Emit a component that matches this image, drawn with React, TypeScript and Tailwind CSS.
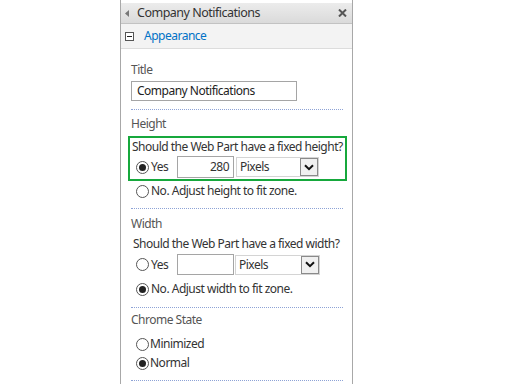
import React from "react";

const Radio = ({ checked }: { checked?: boolean }) => (
  <span className="inline-flex items-center justify-center w-[13px] h-[13px] rounded-full border border-[#555] bg-white shrink-0">
    {checked && <span className="w-[7px] h-[7px] rounded-full bg-[#222]" />}
  </span>
);

const Dots = ({ mt }: { mt: string }) => (
  <div className={`${mt} h-0 border-t border-dotted border-[#8ea3d6] mr-[9px]`} />
);

const Select = ({ w }: { w: string }) => (
  <div className={`${w} flex items-center h-[20px] border border-[#d4d4d4] bg-white`}>
    <span className="flex-1 pl-[3px] text-[#333]">Pixels</span>
    <span className="w-[18px] h-[18px] flex items-center justify-center border border-[#8a8a8a] bg-[#f0f0f0]">
      <svg width="10" height="7" viewBox="0 0 10 7">
        <path d="M1 1.2 L5 5.2 L9 1.2" stroke="#111" strokeWidth="2" fill="none" />
      </svg>
    </span>
  </div>
);

export default function App() {
  return (
    <div
      className="w-[512px] h-[384px] bg-white overflow-hidden text-[12px] tracking-[-0.5px] text-[#444] whitespace-nowrap"
      style={{ fontFamily: '"Noto Sans", "Open Sans", sans-serif' }}
    >
      <div className="ml-[120px] w-[233px] h-[384px] border-l border-r border-[#a8a8a8] pt-[3px] flex flex-col">
        <div className="h-[21px] box-border flex items-center bg-gradient-to-b from-[#ececec] to-[#dadada] border-b border-[#c2c2c2] pl-[4px] pr-[5px]">
          <svg width="4" height="7" viewBox="0 0 4 7" className="mr-[8px]">
            <path d="M4 0 L0 3.5 L4 7 Z" fill="#777" />
          </svg>
          <span className="flex-1 text-[#333] text-[12.5px]">Company Notifications</span>
          <svg width="9" height="8" viewBox="0 0 9 8">
            <path d="M1 0.5 L8 7.5 M8 0.5 L1 7.5" stroke="#555" strokeWidth="2" />
          </svg>
        </div>
        <div className="h-[25px] box-border flex items-center bg-[#f3f3f3] border-b border-[#dcdcdc] pl-[4px]">
          <span className="w-[9px] h-[9px] border border-[#555] bg-white flex items-center justify-center mr-[10px]">
            <span className="w-[5px] h-[1px] bg-[#222]" />
          </span>
          <span className="text-[#0072c6]">Appearance</span>
        </div>
        <div className="pl-[10px] pt-[12px] flex flex-col">
          <div className="h-[18px] leading-[18px] text-[#555]">Title</div>
          <div className="mt-[2px] w-[166px] h-[20px] border border-[#a5a5a5] flex items-center pl-[5px] text-[#222]">
            Company Notifications
          </div>
          <Dots mt="mt-[8px]" />
          <div className="mt-[5px] h-[18px] leading-[18px] text-[#555]">Height</div>
          <div className="mt-[3px] -ml-[3px] mr-[5px] border-2 border-[#16a83c] pl-[2px] pb-[1px]">
            <div className="h-[18px] leading-[18px] text-[#333]">Should the Web Part have a fixed height?</div>
            <div className="flex items-center h-[22px] pl-[4px] text-[#333]">
              <Radio checked />
              <span className="ml-[2px] w-[26px]">Yes</span>
              <div className="w-[57px] h-[22px] border border-[#a5a5a5] flex items-center justify-end pr-[4px]">280</div>
              <div className="ml-[2px]"><Select w="w-[83px]" /></div>
            </div>
          </div>
          <div className="mt-[1px] flex items-center h-[18px] pl-[5px] text-[#333]">
            <Radio />
            <span className="ml-[2px]">No. Adjust height to fit zone.</span>
          </div>
          <Dots mt="mt-[8px]" />
          <div className="mt-[6px] h-[18px] leading-[18px] text-[#555]">Width</div>
          <div className="mt-[2px] pl-[2px] h-[18px] leading-[18px] text-[#333]">Should the Web Part have a fixed width?</div>
          <div className="mt-[1px] flex items-center h-[21px] pl-[5px] text-[#333]">
            <Radio />
            <span className="ml-[2px] w-[26px]">Yes</span>
            <div className="w-[57px] h-[21px] border border-[#a5a5a5]" />
            <div className="ml-[1px]"><Select w="w-[85px]" /></div>
          </div>
          <div className="mt-[5px] flex items-center h-[18px] pl-[5px] text-[#333]">
            <Radio checked />
            <span className="ml-[2px]">No. Adjust width to fit zone.</span>
          </div>
          <Dots mt="mt-[9px]" />
          <div className="mt-[3px] h-[18px] leading-[18px] text-[#555]">Chrome State</div>
          <div className="mt-[6px] flex items-center h-[18px] pl-[5px] text-[#333]">
            <Radio />
            <span className="ml-[1px]">Minimized</span>
          </div>
          <div className="mt-[1px] flex items-center h-[18px] pl-[5px] text-[#333]">
            <Radio checked />
            <span className="ml-[1px]">Normal</span>
          </div>
          <Dots mt="mt-[8px]" />
        </div>
      </div>
    </div>
  );
}
